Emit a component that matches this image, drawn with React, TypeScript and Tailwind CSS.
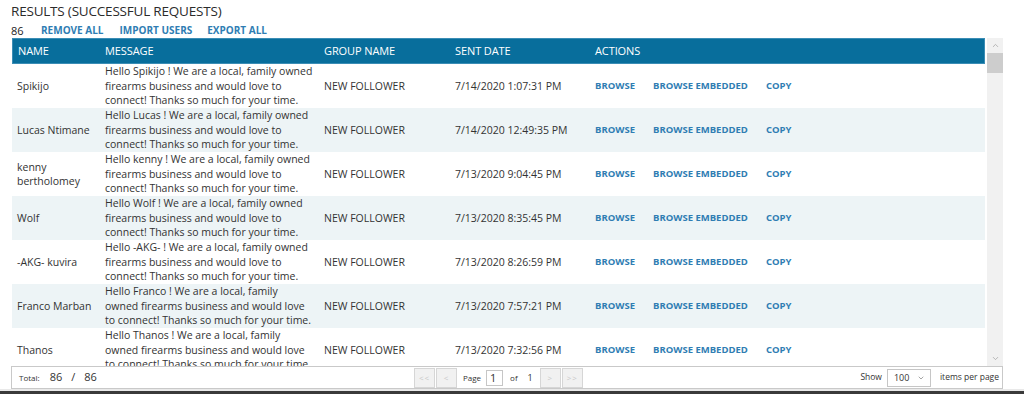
import { ChevronDown, ChevronUp } from "lucide-react";

const MSG_TAIL = [
  "We are a local, family owned",
  "firearms business and would love to",
  "connect! Thanks so much for your time.",
];

const ROWS: { name: string; lines: string[]; date: string }[] = [
  {
    name: "Spikijo",
    lines: ["Hello Spikijo ! " + MSG_TAIL[0], MSG_TAIL[1], MSG_TAIL[2]],
    date: "7/14/2020 1:07:31 PM",
  },
  {
    name: "Lucas Ntimane",
    lines: ["Hello Lucas ! " + MSG_TAIL[0], MSG_TAIL[1], MSG_TAIL[2]],
    date: "7/14/2020 12:49:35 PM",
  },
  {
    name: "kenny bertholomey",
    lines: ["Hello kenny ! " + MSG_TAIL[0], MSG_TAIL[1], MSG_TAIL[2]],
    date: "7/13/2020 9:04:45 PM",
  },
  {
    name: "Wolf",
    lines: ["Hello Wolf ! " + MSG_TAIL[0], MSG_TAIL[1], MSG_TAIL[2]],
    date: "7/13/2020 8:35:45 PM",
  },
  {
    name: "-AKG- kuvira",
    lines: ["Hello -AKG- ! " + MSG_TAIL[0], MSG_TAIL[1], MSG_TAIL[2]],
    date: "7/13/2020 8:26:59 PM",
  },
  {
    name: "Franco Marban",
    lines: [
      "Hello Franco ! We are a local, family",
      "owned firearms business and would love",
      "to connect! Thanks so much for your time.",
    ],
    date: "7/13/2020 7:57:21 PM",
  },
  {
    name: "Thanos",
    lines: [
      "Hello Thanos ! We are a local, family",
      "owned firearms business and would love",
      "to connect! Thanks so much for your time.",
    ],
    date: "7/13/2020 7:32:56 PM",
  },
];

function PagerBtn({ label }: { label: string }) {
  return (
    <div className="w-[21px] h-[20px] flex items-center justify-center border border-[#d6d6d6] bg-[#f1f1f1] text-[8px] tracking-[1px] text-[#c8c8c8]">
      {label}
    </div>
  );
}

export default function App() {
  return (
    <div
      className="w-[1024px] h-[394px] bg-white overflow-hidden flex flex-col text-[#333]"
      style={{ fontFamily: '"Open Sans", "Liberation Sans", sans-serif' }}
    >
      <div className="flex-1 pl-[11px] pr-[21px] flex flex-col min-h-0">
        {/* Title */}
        <div className="h-[22px] pt-[2px] text-[13.5px] leading-[18px] text-[#2b2b2b] tracking-[-0.2px]">
          RESULTS (SUCCESSFUL REQUESTS)
        </div>

        {/* Toolbar */}
        <div className="h-[16px] flex items-center text-[10px] leading-none">
          <span className="text-[11px] text-[#222] w-[30px]">86</span>
          <span className="font-bold text-[#2f7db3] mr-[16px]">REMOVE ALL</span>
          <span className="font-bold text-[#2f7db3] mr-[15px]">IMPORT USERS</span>
          <span className="font-bold text-[#2f7db3]">EXPORT ALL</span>
        </div>

        {/* Grid */}
        <div className="h-[328px] flex">
          <div className="flex-1 pl-px pr-[2px] overflow-hidden">
            <div className="h-[26px] bg-[#086e9c] border border-[#3b8db5] flex items-center text-white text-[11px] tracking-[-0.1px]">
              <div className="w-[92px] pl-[5px]">NAME</div>
              <div className="w-[219px]">MESSAGE</div>
              <div className="w-[131px]">GROUP NAME</div>
              <div className="w-[140px]">SENT DATE</div>
              <div>ACTIONS</div>
            </div>
            {ROWS.map((r, i) => (
              <div
                key={r.name}
                className={`h-[44px] flex items-center text-[10.5px] leading-[14.5px] ${
                  i % 2 === 1 ? "bg-[#edf4f6]" : "bg-white"
                }`}
              >
                <div className="w-[93px] pl-[5px] pr-2">{r.name}</div>
                <div className="w-[219px] whitespace-nowrap">
                  {r.lines.map((l) => (
                    <div key={l}>{l}</div>
                  ))}
                </div>
                <div className="w-[131px]">NEW FOLLOWER</div>
                <div className="w-[140px]">{r.date}</div>
                <div className="flex text-[9.5px] font-bold text-[#2f7db3]">
                  <span className="w-[58px]">BROWSE</span>
                  <span className="w-[113px]">BROWSE EMBEDDED</span>
                  <span>COPY</span>
                </div>
              </div>
            ))}
          </div>

          {/* Scrollbar */}
          <div className="w-[16px] bg-[#f1f1f1] flex flex-col items-center">
            <div className="h-[15px] flex items-center justify-center">
              <ChevronUp size={9} color="#a3a3a3" strokeWidth={2} />
            </div>
            <div className="w-full h-[20px] bg-[#cdcdcd]" />
            <div className="flex-1" />
            <div className="h-[15px] flex items-center justify-center">
              <ChevronDown size={9} color="#a3a3a3" strokeWidth={2} />
            </div>
          </div>
        </div>

        {/* Footer */}
        <div className="h-[23px] border border-[#c9c9c9] flex items-center text-[#333]">
          <div className="w-[402px] flex items-center pl-[7px]">
            <span className="text-[8px] mr-[10px]">Total:</span>
            <span className="text-[11px]">86</span>
            <span className="text-[11px] mx-[9px]">/</span>
            <span className="text-[11px]">86</span>
          </div>
          <div className="flex items-center gap-[1px]">
            <PagerBtn label="<<" />
            <PagerBtn label="<" />
            <span className="text-[8px] ml-[5px] mr-[4px]">Page</span>
            <div className="w-[17px] h-[16px] border border-[#c6c6c6] text-[11px] leading-[14px] pl-[3px]">
              1
            </div>
            <span className="text-[8px] ml-[6px] mr-[9px]">of</span>
            <span className="text-[9px] mr-[6px]">1</span>
            <PagerBtn label=">" />
            <PagerBtn label=">>" />
          </div>
          <div className="flex-1 flex items-center justify-end pr-[3px]">
            <span className="text-[8.5px] mr-[5px]">Show</span>
            <div className="w-[44px] h-[18px] border border-[#c6c6c6] flex items-center justify-between pl-[6px] pr-[5px] text-[9px]">
              <span>100</span>
              <ChevronDown size={8} color="#777" strokeWidth={2} />
            </div>
            <span className="text-[8.5px] ml-[9px]">items per page</span>
          </div>
        </div>
      </div>
      <div className="h-[2px] bg-[#e9e9e9]" />
      <div className="h-[3px] bg-[#3a3a3a]" />
    </div>
  );
}
